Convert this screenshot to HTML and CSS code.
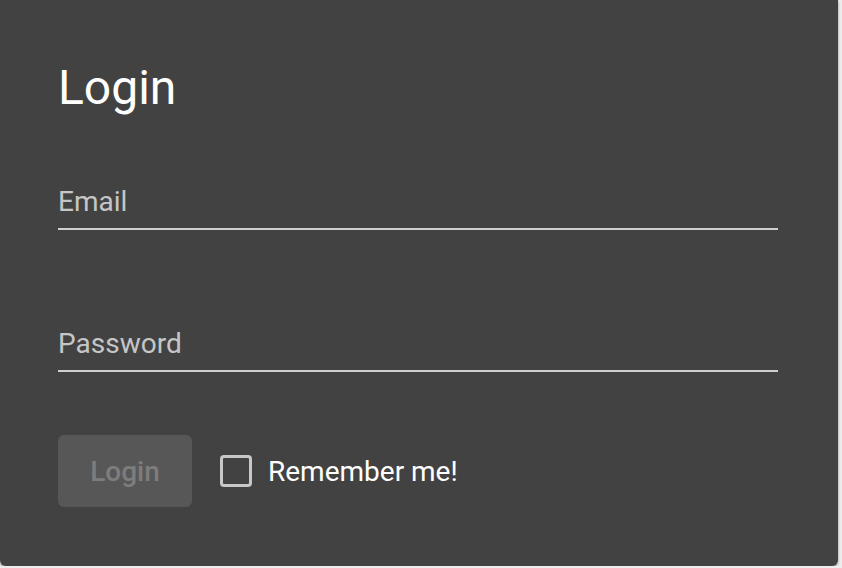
FILE: index.html
```html
<!DOCTYPE html>
<html>
<head>
<meta charset="utf-8">
<link rel="stylesheet" href="styles.css">
</head>
<body>
<div class="card">
  <h1 class="title">Login</h1>
  <div class="field field-email">
    <label class="label">Email</label>
    <div class="underline"></div>
  </div>
  <div class="field field-password">
    <label class="label">Password</label>
    <div class="underline"></div>
  </div>
  <div class="actions">
    <button class="btn" disabled>Login</button>
    <label class="check">
      <span class="box"></span>
      <span class="check-text">Remember me!</span>
    </label>
  </div>
</div>
</body>
</html>
```
FILE: styles.css
```css
html, body {
  margin: 0;
  padding: 0;
  background: #ededed;
  font-family: Roboto, "Liberation Sans", sans-serif;
}
.card {
  box-sizing: border-box;
  width: 838px;
  height: 566px;
  background: #424242;
  border-radius: 0 0 6px 6px;
  box-shadow: 0 1px 3px rgba(0,0,0,0.3), 0 2px 2px rgba(0,0,0,0.15);
  padding: 60px 60px 0 58px;
}
.title {
  margin: 0;
  font-size: 48px;
  line-height: 56px;
  font-weight: 400;
  color: #ffffff;
}
.field {
  width: 720px;
}
.field-email {
  margin-top: 69px;
}
.field-password {
  margin-top: 97px;
}
.label {
  display: block;
  font-size: 28px;
  line-height: 33px;
  color: #c6c6c6;
  padding-bottom: 10px;
}
.underline {
  height: 2px;
  background: #cfcfcf;
}
.actions {
  display: flex;
  align-items: center;
  margin-top: 63px;
}
.btn {
  width: 134px;
  height: 72px;
  border: none;
  border-radius: 6px;
  background: #575757;
  color: #7d7d7d;
  font-family: Roboto, "Liberation Sans", sans-serif;
  font-size: 28px;
  font-weight: 500;
  padding: 0;
}
.check {
  display: flex;
  align-items: center;
  margin-left: 28px;
}
.box {
  box-sizing: border-box;
  width: 32px;
  height: 32px;
  border: 3px solid #c8c8c8;
  border-radius: 4px;
}
.check-text {
  margin-left: 16px;
  font-size: 28px;
  line-height: 33px;
  color: #ffffff;
}
```
